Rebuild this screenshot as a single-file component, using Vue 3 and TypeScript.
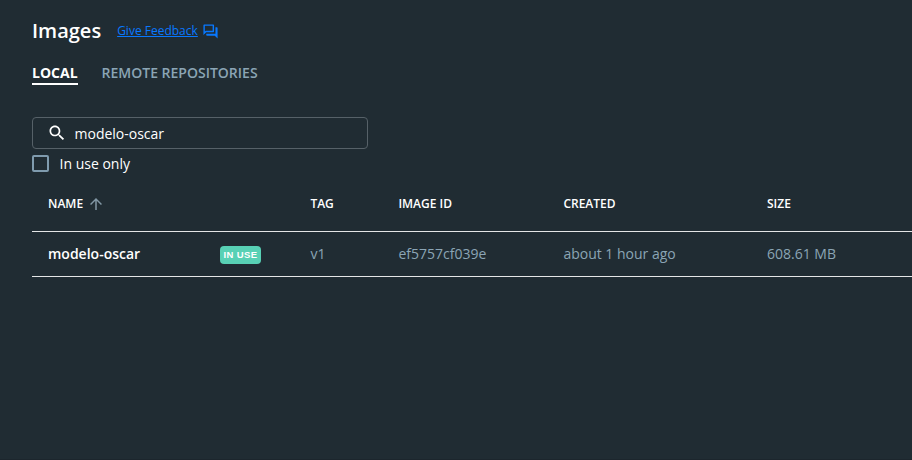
<script setup lang="ts">
import { ref, computed } from 'vue'

interface ImageRow {
  name: string
  inUse: boolean
  tag: string
  id: string
  created: string
  size: string
}

const tabs: string[] = ['Local', 'Remote repositories']
const activeTab = ref<string>('Local')
const query = ref<string>('modelo-oscar')
const inUseOnly = ref<boolean>(false)

const images: ImageRow[] = [
  {
    name: 'modelo-oscar',
    inUse: true,
    tag: 'v1',
    id: 'ef5757cf039e',
    created: 'about 1 hour ago',
    size: '608.61 MB',
  },
]

const rows = computed<ImageRow[]>(() =>
  images.filter((i) => i.name.includes(query.value) && (!inUseOnly.value || i.inUse)),
)
</script>

<template>
  <main class="page">
    <header class="header">
      <h1 class="title">Images</h1>
      <a class="feedback" href="#">
        <span class="feedback-text">Give Feedback</span>
        <svg class="feedback-icon" viewBox="0 0 24 24">
          <path d="M15 4v7H5.17L4 12.17V4h11m1-2H3c-.55 0-1 .45-1 1v14l4-4h10c.55 0 1-.45 1-1V3c0-.55-.45-1-1-1zm5 4h-2v9H6v2c0 .55.45 1 1 1h11l4 4V7c0-.55-.45-1-1-1z" />
        </svg>
      </a>
    </header>

    <nav class="tabs">
      <button
        v-for="tab in tabs"
        :key="tab"
        class="tab"
        :class="{ active: tab === activeTab }"
        @click="activeTab = tab"
      >{{ tab }}</button>
    </nav>

    <label class="search">
      <svg class="search-icon" viewBox="0 0 24 24">
        <path d="M15.5 14h-.79l-.28-.27C15.41 12.59 16 11.11 16 9.5 16 5.91 13.09 3 9.5 3S3 5.91 3 9.5 5.91 16 9.5 16c1.61 0 3.09-.59 4.23-1.57l.27.28v.79l5 4.99L20.49 19l-4.99-5zm-6 0C7.01 14 5 11.99 5 9.5S7.01 5 9.5 5 14 7.01 14 9.5 11.99 14 9.5 14z" />
      </svg>
      <input v-model="query" class="search-input" type="text" spellcheck="false" />
    </label>

    <label class="filter">
      <input v-model="inUseOnly" class="checkbox" type="checkbox" />
      <span>In use only</span>
    </label>

    <section class="table">
      <div class="row head">
        <div class="cell sorted">
          <span>NAME</span>
          <svg class="sort-icon" viewBox="0 0 24 24">
            <path d="M4 12l1.41 1.41L11 7.83V20h2V7.83l5.58 5.59L20 12l-8-8-8 8z" />
          </svg>
        </div>
        <div></div>
        <div>TAG</div>
        <div>IMAGE ID</div>
        <div>CREATED</div>
        <div>SIZE</div>
      </div>
      <div v-for="row in rows" :key="row.id" class="row body">
        <div class="name">{{ row.name }}</div>
        <div class="status"><span v-if="row.inUse" class="badge">IN USE</span></div>
        <div>{{ row.tag }}</div>
        <div>{{ row.id }}</div>
        <div>{{ row.created }}</div>
        <div>{{ row.size }}</div>
      </div>
    </section>
  </main>
</template>

<style>
body {
  background: #202c33;
}
</style>

<style scoped>
.page {
  box-sizing: border-box;
  height: 460px;
  padding: 16px 0 0 32px;
  overflow: hidden;
  border-bottom: 1px solid #1c262d;
  background: #202c33;
  color: #fff;
  font-family: "Open Sans", "Noto Sans", sans-serif;
  font-size: 14px;
}

.header {
  display: flex;
  align-items: center;
  gap: 16px;
  height: 30px;
}

.title {
  margin: 0;
  font-size: 20px;
  line-height: 30px;
  font-weight: 600;
}

.feedback {
  display: flex;
  align-items: center;
  gap: 4px;
  color: #0878ff;
  font-size: 12px;
  line-height: 16px;
  text-decoration: none;
}

.feedback-text {
  text-decoration: underline;
}

.feedback-icon {
  width: 17px;
  height: 17px;
  fill: currentColor;
}

.tabs {
  display: flex;
  gap: 24px;
  margin-top: 17px;
}

.tab {
  height: 22px;
  padding: 0;
  border: 0;
  border-bottom: 2px solid transparent;
  background: none;
  color: #8ba5b5;
  font: 600 14px/20px "Open Sans", "Noto Sans", sans-serif;
  text-transform: uppercase;
}

.tab.active {
  border-color: #fff;
  color: #fff;
  font-weight: 700;
}

.search {
  display: flex;
  align-items: center;
  gap: 8px;
  box-sizing: border-box;
  width: 336px;
  height: 32px;
  margin-top: 32px;
  padding: 0 13.5px;
  border: 1px solid #566168;
  border-radius: 4px;
}

.search-icon {
  width: 20px;
  height: 20px;
  fill: #fff;
}

.search-input {
  flex: 1;
  min-width: 0;
  padding: 0;
  border: 0;
  outline: 0;
  background: none;
  color: #fff;
  font: inherit;
}

.filter {
  display: flex;
  align-items: center;
  gap: 10.5px;
  height: 20px;
  margin-top: 4px;
}

.checkbox {
  appearance: none;
  box-sizing: border-box;
  width: 17px;
  height: 17px;
  margin: 0;
  border: 2px solid #7f9bae;
  border-radius: 2px;
}

.row {
  display: grid;
  grid-template-columns: 172px 90.4px 88px 165px 203.6px 1fr;
  align-items: center;
  padding-left: 16px;
  border-bottom: 1px solid #e4e6e7;
}

.head {
  box-sizing: border-box;
  height: 59px;
  padding-top: 3px;
  font-size: 12px;
  font-weight: 600;
}

.body {
  height: 44px;
  color: #8ba5b5;
  line-height: 20px;
}

.body > div {
  padding-bottom: 1px;
}

.sorted {
  display: flex;
  align-items: center;
  gap: 4px;
}

.sort-icon {
  width: 18px;
  height: 18px;
  fill: #8297a5;
}

.name {
  color: #fff;
  font-weight: 600;
}

.body > .status {
  display: flex;
  padding: 1px 0 0;
}

.badge {
  box-sizing: border-box;
  width: 41px;
  height: 18px;
  border-radius: 4px;
  background: #58d1b5;
  color: #fff;
  font: 700 9.5px/18px "Liberation Sans", Arial, sans-serif;
  letter-spacing: 0.4px;
  text-align: center;
}
</style>
